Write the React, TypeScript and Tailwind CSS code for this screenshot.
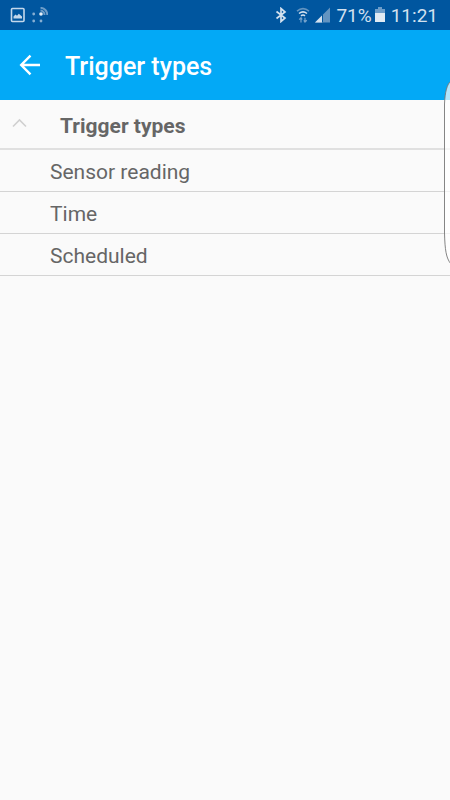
import type { ReactNode } from "react";

const triggerTypes = ["Sensor reading", "Time", "Scheduled"];

function StatusIcons() {
  return (
    <div className="flex items-center gap-1.5" aria-hidden="true">
      <svg className="h-4 w-4" viewBox="0 0 16 16" fill="none">
        <rect x="1.5" y="1.5" width="12.5" height="13" rx="1" stroke="#c3d7eb" strokeWidth="1.6" />
        <path d="M3.5 11.5V9.5L5.5 7.5L7 8.7L8.8 6.8L12 9.5V11.5Z" fill="#c3d7eb" />
      </svg>
      <svg className="h-4 w-4" viewBox="0 0 16 16" fill="none">
        <g fill="#86aed3">
          <circle cx="1.7" cy="7" r="1.4" />
          <circle cx="1.7" cy="14" r="1.4" />
          <circle cx="9" cy="14" r="1.4" />
        </g>
        <path d="M8.5 3.5A4.2 4.2 0 0 1 12.5 8M8.5 .8A7 7 0 0 1 15.3 8" stroke="#6d9dc9" strokeWidth="1.9" />
        <circle cx="9" cy="7" r="1.8" fill="#e6f0f8" />
      </svg>
    </div>
  );
}

function BluetoothIcon() {
  return (
    <svg className="h-4 w-3" viewBox="0 0 12 16" fill="none" aria-hidden="true">
      <path d="M1.5 4.5L10 11L6 14.5V1.5L10 5L1.5 11.5" stroke="#d3e1ef" strokeWidth="1.7" />
    </svg>
  );
}

function WifiIcon() {
  return (
    <svg className="h-4 w-4" viewBox="0 0 16 16" fill="none" aria-hidden="true">
      <path d="M2 4.2Q8 -.8 14 4.2" stroke="#6394c1" strokeWidth="1.6" />
      <path d="M4 6.5Q8 3.2 12 6.5M6 8.8Q8 7.2 10 8.8" stroke="#d3e1ef" strokeWidth="1.5" />
      <path d="M6 15.5V11M4.2 12.7L6 10.8L7.2 12.5M10 10.8V15M8.8 13.3L10 15L11.8 13.3" stroke="#78a4cc" strokeWidth="1.2" />
    </svg>
  );
}

function SignalIcon() {
  return (
    <svg className="h-4 w-4" viewBox="0 0 16 16" aria-hidden="true">
      <path d="M0 15.5L15 .5V15.5Z" fill="#6394c1" />
      <path d="M0 15.5L7.5 8V15.5Z" fill="#d3e1ef" />
      <path d="M7.5 7.5V15.5" stroke="#00569f" />
    </svg>
  );
}

function BatteryIcon() {
  return (
    <svg className="h-4 w-3" viewBox="0 0 12 16" aria-hidden="true">
      <path d="M4 0H8V2H11V6H1V2H4Z" fill="#6d9dc9" />
      <path d="M1 6H11V15H1Z" fill="#e0eaf3" />
    </svg>
  );
}

function StatusBar() {
  return (
    <div className="flex h-[30px] items-center justify-between bg-[#00569f] pr-3 pl-2.5 text-[#d3e1ef]">
      <StatusIcons />
      <div className="flex items-center text-[19px] leading-6">
        <BluetoothIcon />
        <span className="ml-2"><WifiIcon /></span>
        <span className="ml-1"><SignalIcon /></span>
        <span className="ml-[5px] pt-0.5">71%</span>
        <span className="ml-0.5"><BatteryIcon /></span>
        <span className="ml-[5px] pt-0.5">11:21</span>
      </div>
    </div>
  );
}

function Row({ children }: { children: ReactNode }) {
  return (
    <li className="flex h-[42px] items-center border-b border-[#d4d4d4] pt-0.5 pl-[50px] text-[21px] leading-6">
      {children}
    </li>
  );
}

function EdgePanelHandle() {
  return (
    <svg className="absolute top-[80px] right-0 h-[186px] w-1.5" viewBox="0 0 6 186" fill="none" aria-hidden="true">
      <path
        d="M7 1C3 4 1 12 .5 24V153C1 170 2 178 7 184"
        fill="#ffffff"
        fillOpacity="0.7"
        stroke="#777777"
        strokeWidth="0.9"
      />
    </svg>
  );
}

export default function App() {
  return (
    <div className="relative min-h-screen overflow-hidden bg-[#fafafa] font-[Roboto,sans-serif] text-[#666666]">
      <StatusBar />
      <header className="flex h-[70px] items-center bg-[#03a9f6] pl-[18px] text-white">
        <button type="button" aria-label="Back" className="h-6 w-6">
          <svg className="h-6 w-6" viewBox="0 0 24 24" fill="none" aria-hidden="true">
            <path d="M22 12H3.5M12.5 2.7L3.2 12L12.5 21.3" stroke="currentColor" strokeWidth="2.4" />
          </svg>
        </button>
        <h1 className="ml-[23px] pt-1 text-[25px] leading-8 font-medium">Trigger types</h1>
      </header>
      <main>
        <h2 className="border-b-2 border-[#e0e0e0]">
          <button type="button" aria-expanded="true" className="flex h-12 w-full items-center pl-3 text-left">
            <svg className="h-4 w-4" viewBox="0 0 16 16" fill="none" aria-hidden="true">
              <path d="M1 10.5L7.5 4L14 10.5" stroke="#d0d0d0" strokeWidth="1.6" />
            </svg>
            <span className="ml-8 pt-1 text-[21px] leading-6 font-bold">Trigger types</span>
          </button>
        </h2>
        <ul>
          {triggerTypes.map((type) => (
            <Row key={type}>{type}</Row>
          ))}
        </ul>
      </main>
      <EdgePanelHandle />
    </div>
  );
}
